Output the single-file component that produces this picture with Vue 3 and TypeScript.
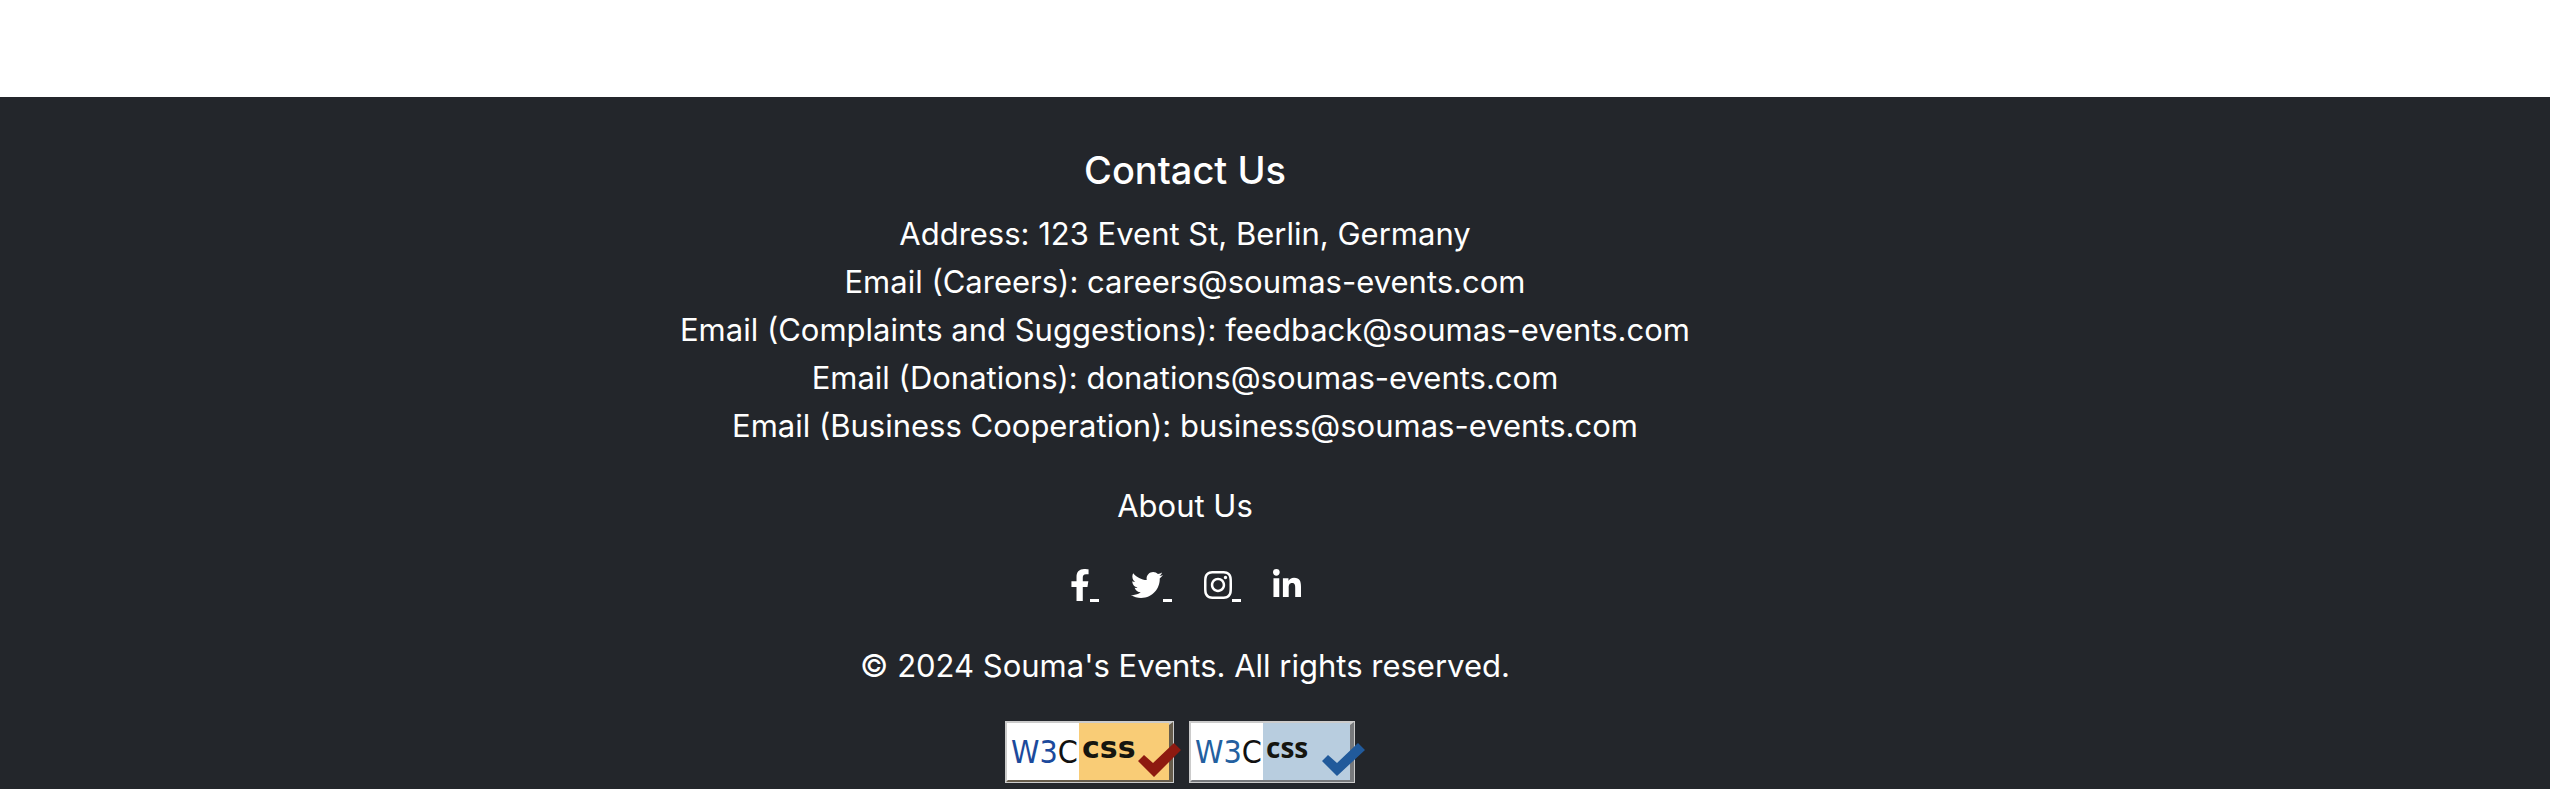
<script setup lang="ts">
interface SocialLink {
  name: string
  width: number
  path: string
}

interface Badge {
  label: string
  fill: string
  ink: string
  check: string
  points: string
  edge: string
  width: number
  textClass: string
}

const contacts: string[] = [
  'Address: 123 Event St, Berlin, Germany',
  'Email (Careers): careers@soumas-events.com',
  'Email (Complaints and Suggestions): feedback@soumas-events.com',
  'Email (Donations): donations@soumas-events.com',
  'Email (Business Cooperation): business@soumas-events.com',
]

const socials: SocialLink[] = [
  {
    name: 'Facebook',
    width: 320,
    path: 'M279.14 288l14.22-92.66h-88.91v-60.13c0-25.35 12.42-50.06 52.24-50.06h40.42V6.26S260.43 0 225.36 0c-73.22 0-121.08 44.38-121.08 124.72v70.62H22.89V288h81.39v224h100.17V288z',
  },
  {
    name: 'Twitter',
    width: 512,
    path: 'M459.37 151.716c.325 4.548.325 9.097.325 13.645 0 138.72-105.583 298.558-298.558 298.558-59.452 0-114.68-17.219-161.137-47.106 8.447.974 16.568 1.299 25.34 1.299 49.055 0 94.213-16.568 130.274-44.832-46.132-.975-84.792-31.188-98.112-72.772 6.498.974 12.995 1.624 19.818 1.624 9.421 0 18.843-1.3 27.614-3.573-48.081-9.747-84.143-51.98-84.143-102.985v-1.299c13.969 7.797 30.214 12.67 47.431 13.319-28.264-18.843-46.781-51.005-46.781-87.391 0-19.492 5.197-37.36 14.294-52.954 51.655 63.675 129.3 105.258 216.365 109.807-1.624-7.797-2.599-15.918-2.599-24.04 0-57.828 46.782-104.934 104.934-104.934 30.213 0 57.502 12.67 76.67 33.137 23.715-4.548 46.456-13.32 66.599-25.34-7.798 24.366-24.366 44.833-46.132 57.827 21.117-2.273 41.584-8.122 60.426-16.243-14.292 20.791-32.161 39.308-52.628 54.253z',
  },
  {
    name: 'Instagram',
    width: 448,
    path: 'M224.1 141c-63.6 0-114.9 51.3-114.9 114.9s51.3 114.9 114.9 114.9S339 319.5 339 255.9 287.7 141 224.1 141zm0 189.6c-41.1 0-74.7-33.5-74.7-74.7s33.5-74.7 74.7-74.7 74.7 33.5 74.7 74.7-33.6 74.7-74.7 74.7zm146.4-194.3c0 14.9-12 26.8-26.8 26.8-14.9 0-26.8-12-26.8-26.8s12-26.8 26.8-26.8 26.8 12 26.8 26.8zm76.1 27.2c-1.7-35.9-9.9-67.7-36.2-93.9-26.2-26.2-58-34.4-93.9-36.2-37-2.1-147.9-2.1-184.9 0-35.8 1.7-67.6 9.9-93.9 36.1s-34.4 58-36.2 93.9c-2.1 37-2.1 147.9 0 184.9 1.7 35.9 9.9 67.7 36.2 93.9s58 34.4 93.9 36.2c37 2.1 147.9 2.1 184.9 0 35.9-1.7 67.7-9.9 93.9-36.2 26.2-26.2 34.4-58 36.2-93.9 2.1-37 2.1-147.8 0-184.8zM398.8 388c-7.8 19.6-22.9 34.7-42.6 42.6-29.5 11.7-99.5 9-132.1 9s-102.7 2.6-132.1-9c-19.6-7.8-34.7-22.9-42.6-42.6-11.7-29.5-9-99.5-9-132.1s-2.6-102.7 9-132.1c7.8-19.6 22.9-34.7 42.6-42.6 29.5-11.7 99.5-9 132.1-9s102.7-2.6 132.1 9c19.6 7.8 34.7 22.9 42.6 42.6 11.7 29.5 9 99.5 9 132.1s2.7 102.7-9 132.1z',
  },
  {
    name: 'LinkedIn',
    width: 448,
    path: 'M100.28 448H7.4V148.9h92.88zM53.79 108.1C24.09 108.1 0 83.5 0 53.8a53.79 53.79 0 0 1 107.58 0c0 29.7-24.1 54.3-53.79 54.3zM447.9 448h-92.68V302.4c0-34.7-.7-79.2-48.29-79.2-48.29 0-55.69 37.7-55.69 76.7V448h-92.78V148.9h89.08v40.8h1.3c12.4-23.5 42.69-48.3 87.88-48.3 94 0 111.28 61.9 111.28 142.3V448z',
  },
]

const badges: Badge[] = [
  {
    label: 'Valid CSS',
    fill: '#f9cc76',
    ink: '#1c4a9c',
    check: '#8e1a10',
    points: '133,40 139,34 148,42 169,22 176,29 149,56',
    edge: '#665c4b',
    width: 169,
    textClass: 'css-wide',
  },
  {
    label: 'Valid CSS level 3',
    fill: '#b8cddf',
    ink: '#2360a0',
    check: '#215a9b',
    points: '133,40 139,34 148,42 169,22 176,29 148,55',
    edge: '#77797c',
    width: 166,
    textClass: 'css-plain',
  },
]
</script>

<template>
  <div class="page">
    <footer class="footer">
      <div class="content">
        <h5>Contact Us</h5>
        <address>
          <p v-for="line in contacts" :key="line">{{ line }}</p>
        </address>
        <p class="row"><a class="about" href="#about">About Us</a></p>
        <nav class="socials" aria-label="Social media">
          <a v-for="(s, i) in socials" :key="s.name" href="#" :aria-label="s.name">
            <svg class="icon" :viewBox="`0 0 ${s.width} 512`" aria-hidden="true">
              <path :d="s.path" fill="currentColor" />
            </svg>
            <span v-if="i < socials.length - 1" class="trail"></span>
          </a>
        </nav>
        <p class="row">© 2024 Souma's Events. All rights reserved.</p>
        <div class="badges">
          <a v-for="b in badges" :key="b.label" href="#" :aria-label="b.label">
            <svg class="badge" viewBox="0 0 176 62">
              <rect :width="b.width" height="62" fill="#cbcbcb" />
              <path :d="`M${b.width - 1} 1V61H1L4 58H${b.width - 5}V4z`" :fill="b.edge" />
              <rect x="2" y="2" width="72" height="57" fill="#fff" />
              <rect x="74" y="2" :width="b.width - 79" height="57" :fill="b.fill" />
              <text class="w3c" x="6" y="42" :fill="b.ink">W3<tspan fill="#111">C</tspan></text>
              <text :class="b.textClass" x="77" y="37" fill="#15150f">css</text>
              <polygon :points="b.points" :fill="b.check" />
            </svg>
          </a>
        </div>
      </div>
    </footer>
  </div>
</template>

<style>
body {
  margin: 0;
  background: #fff;
}
</style>

<style scoped>
.page {
  padding-top: 97px;
  font-family: Inter, "Liberation Sans", sans-serif;
  font-size: 31px;
  line-height: 48px;
  color: #fff;
}
.footer {
  background: #23262b;
  padding: 49px 180px 6px 0;
}
.content {
  text-align: center;
}
h5 {
  margin: 0 0 16px;
  font-size: 38px;
  font-weight: 500;
  line-height: 48px;
}
address {
  margin-bottom: 32px;
  font-style: normal;
}
p {
  margin: 0;
}
.row {
  margin-bottom: 31px;
}
a {
  color: inherit;
  text-decoration: none;
}
.socials {
  display: flex;
  justify-content: center;
  gap: 32px;
  height: 48px;
  margin-bottom: 33px;
}
.socials a {
  display: flex;
  align-items: center;
}
.icon {
  display: block;
  height: 32px;
}
.trail {
  width: 9px;
  height: 31px;
  border-bottom: 3px solid currentColor;
}
.badges {
  display: flex;
  justify-content: center;
  gap: 8px;
}
.badge {
  display: block;
  width: 176px;
  height: 62px;
}
.w3c {
  font: 32px "DejaVu Sans Condensed", "DejaVu Sans", sans-serif;
  stroke: currentColor;
  stroke-width: 0;
}
.css-wide {
  font: bold 30px "DejaVu Sans", sans-serif;
}
.css-plain {
  font: bold 28px "Open Sans", sans-serif;
}
</style>
